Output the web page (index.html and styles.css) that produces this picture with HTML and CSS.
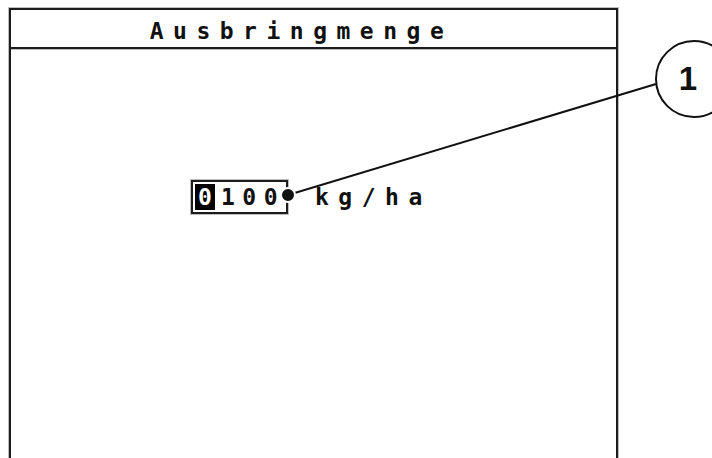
FILE: index.html
```html
<!DOCTYPE html>
<html lang="de">
  <head>
    <meta charset="UTF-8" />
    <meta name="viewport" content="width=device-width, initial-scale=1.0" />
    <link rel="stylesheet" href="styles.css">
    <title>Ausbringmenge</title>
  </head>
  <body>
    <div class="page">
      <div class="screen">
        <div class="title">Ausbringmenge</div>
        <div class="body">
          <div class="row">
            <span class="field"><span class="cursor">0</span>100</span>
            <span class="unit">kg/ha</span>
          </div>
        </div>
      </div>

      <!-- callout over the display -->
      <svg class="callout" width="712" height="458" viewBox="0 0 712 458">
        <line x1="288" y1="195" x2="656" y2="84" stroke="#111" stroke-width="2" />
        <circle cx="288" cy="195" r="7" fill="#111" stroke="#fff" stroke-width="2" />
        <circle cx="694" cy="79" r="38" fill="#fff" stroke="#111" stroke-width="2" />
        <text x="688" y="90" text-anchor="middle" class="num">1</text>
      </svg>
    </div>
  </body>
</html>
```

FILE: styles.css
```css
body {
  margin: 0;
  background: #fff;
}

.page {
  position: relative;
  width: 712px;
  height: 458px;
  overflow: hidden;
}

.screen {
  margin: 8px 0 0 9px;
  width: 605px;
  height: 460px;
  border: 2px solid #1c1c1c;
  border-bottom: none;
  box-shadow: 0 0 0 1px #bdbdbd;
  font-family: "DejaVu Sans Mono", monospace;
  font-weight: bold;
  color: #111;
}

.title {
  height: 37px;
  line-height: 42px;
  border-bottom: 2px solid #1c1c1c;
  box-shadow: 0 1px 0 #bdbdbd;
  text-align: center;
  font-size: 23px;
  letter-spacing: 9.5px;
  padding-right: 24px;
}

.body {
  padding: 131px 0 0 180px;
}

.row {
  display: flex;
  align-items: center;
  gap: 27px;
  font-size: 23px;
}

.field {
  display: inline-block;
  border: 2px solid #1c1c1c;
  box-shadow: 0 0 0 1px #bdbdbd;
  padding: 2px 0 2px 2px;
  line-height: 26px;
  letter-spacing: 7.5px;
  width: 91px;
  white-space: nowrap;
  overflow: hidden;
}

.cursor {
  display: inline-block;
  width: 20px;
  background: #000;
  color: #fff;
  text-align: center;
  letter-spacing: 0;
  margin-right: 6px;
}

.unit {
  letter-spacing: 9.5px;
}

.callout {
  position: absolute;
  top: 0;
  left: 0;
}

.num {
  font-family: "Liberation Sans", Arial, sans-serif;
  font-weight: bold;
  font-size: 33px;
  fill: #111;
}
```
